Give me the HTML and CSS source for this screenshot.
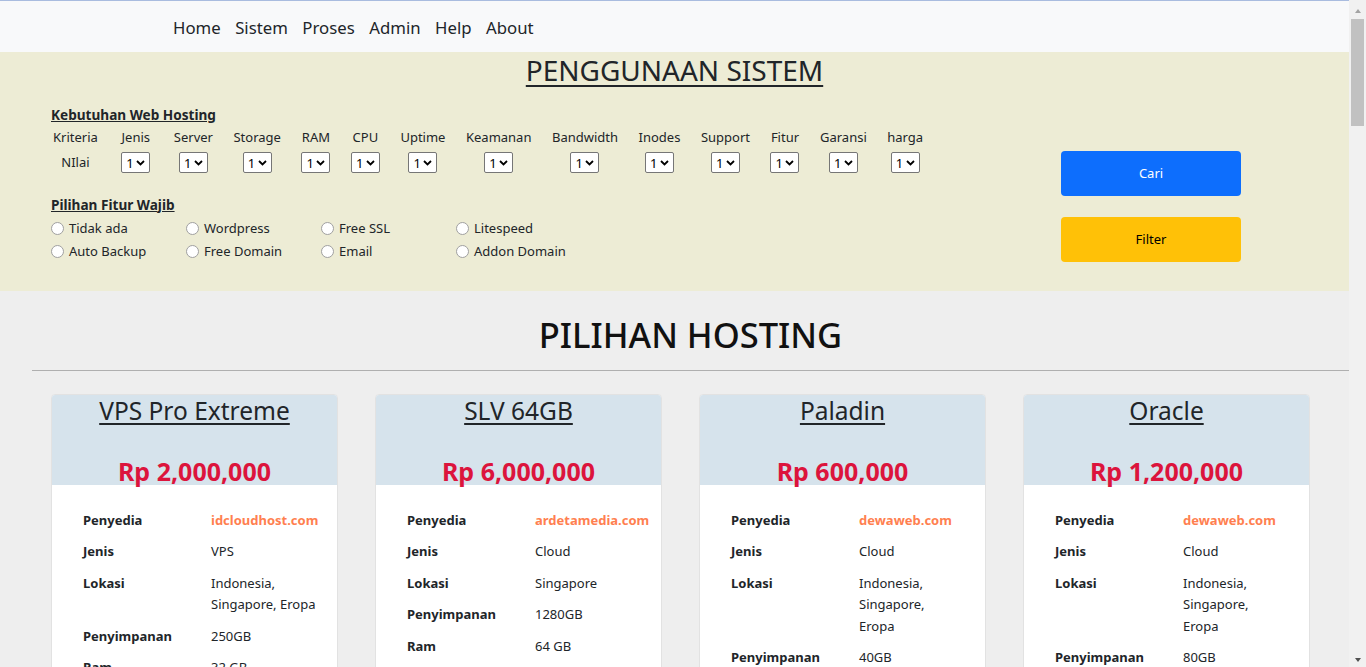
FILE: index.html
```html
<!DOCTYPE html>
<html lang="id">
<head>
<meta charset="utf-8">
<title>Penggunaan Sistem</title>
<link rel="stylesheet" href="styles.css">
</head>
<body>
<nav class="navbar">
  <ul class="nav-links">
    <li><a href="#">Home</a></li>
    <li><a href="#">Sistem</a></li>
    <li><a href="#">Proses</a></li>
    <li><a href="#">Admin</a></li>
    <li><a href="#">Help</a></li>
    <li><a href="#">About</a></li>
  </ul>
</nav>

<section class="usage">
  <h3 class="usage-title">PENGGUNAAN SISTEM</h3>
  <div class="usage-grid">
    <form class="usage-form">
      <h6 class="form-heading">Kebutuhan Web Hosting</h6>
      <table class="criteria">
        <tr>
          <th>Kriteria</th><th>Jenis</th><th>Server</th><th>Storage</th><th>RAM</th><th>CPU</th><th>Uptime</th><th>Keamanan</th><th>Bandwidth</th><th>Inodes</th><th>Support</th><th>Fitur</th><th>Garansi</th><th>harga</th>
        </tr>
        <tr>
          <td>NIlai</td>
          <td><select><option>1</option><option>2</option><option>3</option></select></td>
          <td><select><option>1</option><option>2</option><option>3</option></select></td>
          <td><select><option>1</option><option>2</option><option>3</option></select></td>
          <td><select><option>1</option><option>2</option><option>3</option></select></td>
          <td><select><option>1</option><option>2</option><option>3</option></select></td>
          <td><select><option>1</option><option>2</option><option>3</option></select></td>
          <td><select><option>1</option><option>2</option><option>3</option></select></td>
          <td><select><option>1</option><option>2</option><option>3</option></select></td>
          <td><select><option>1</option><option>2</option><option>3</option></select></td>
          <td><select><option>1</option><option>2</option><option>3</option></select></td>
          <td><select><option>1</option><option>2</option><option>3</option></select></td>
          <td><select><option>1</option><option>2</option><option>3</option></select></td>
          <td><select><option>1</option><option>2</option><option>3</option></select></td>
        </tr>
      </table>
      <h6 class="form-heading features-heading">Pilihan Fitur Wajib</h6>
      <div class="features">
        <label class="feature"><input type="radio" name="f1">Tidak ada</label>
        <label class="feature"><input type="radio" name="f2">Wordpress</label>
        <label class="feature"><input type="radio" name="f3">Free SSL</label>
        <label class="feature"><input type="radio" name="f4">Litespeed</label>
        <label class="feature"><input type="radio" name="f5">Auto Backup</label>
        <label class="feature"><input type="radio" name="f6">Free Domain</label>
        <label class="feature"><input type="radio" name="f7">Email</label>
        <label class="feature"><input type="radio" name="f8">Addon Domain</label>
      </div>
    </form>
    <div class="usage-actions">
      <button class="btn btn-blue" type="button">Cari</button>
      <button class="btn btn-yellow" type="button">Filter</button>
    </div>
  </div>
</section>

<section class="hosting">
  <h1 class="hosting-title">PILIHAN HOSTING</h1>
  <hr class="divider">
  <div class="cards">
    <article class="card">
      <header class="card-head">
        <h4 class="card-title">VPS Pro Extreme</h4>
        <div class="card-price">Rp 2,000,000</div>
      </header>
      <div class="card-body">
        <table class="spec">
          <tr><th>Penyedia</th><td><a class="provider" href="#">idcloudhost.com</a></td></tr>
          <tr><th>Jenis</th><td>VPS</td></tr>
          <tr><th>Lokasi</th><td>Indonesia, Singapore, Eropa</td></tr>
          <tr><th>Penyimpanan</th><td>250GB</td></tr>
          <tr><th>Ram</th><td>32 GB</td></tr>
          <tr><th>CPU</th><td>8 Core</td></tr>
          <tr><th>Uptime</th><td>99.9%</td></tr>
          <tr><th>Bandwidth</th><td>Unlimited</td></tr>
        </table>
      </div>
    </article>
    <article class="card">
      <header class="card-head">
        <h4 class="card-title">SLV 64GB</h4>
        <div class="card-price">Rp 6,000,000</div>
      </header>
      <div class="card-body">
        <table class="spec">
          <tr><th>Penyedia</th><td><a class="provider" href="#">ardetamedia.com</a></td></tr>
          <tr><th>Jenis</th><td>Cloud</td></tr>
          <tr><th>Lokasi</th><td>Singapore</td></tr>
          <tr><th>Penyimpanan</th><td>1280GB</td></tr>
          <tr><th>Ram</th><td>64 GB</td></tr>
          <tr><th>CPU</th><td>16 Core</td></tr>
          <tr><th>Uptime</th><td>99.9%</td></tr>
          <tr><th>Bandwidth</th><td>Unlimited</td></tr>
        </table>
      </div>
    </article>
    <article class="card">
      <header class="card-head">
        <h4 class="card-title">Paladin</h4>
        <div class="card-price">Rp 600,000</div>
      </header>
      <div class="card-body">
        <table class="spec">
          <tr><th>Penyedia</th><td><a class="provider" href="#">dewaweb.com</a></td></tr>
          <tr><th>Jenis</th><td>Cloud</td></tr>
          <tr><th>Lokasi</th><td>Indonesia, Singapore, Eropa</td></tr>
          <tr><th>Penyimpanan</th><td>40GB</td></tr>
          <tr><th>Ram</th><td>4 GB</td></tr>
          <tr><th>CPU</th><td>2 Core</td></tr>
          <tr><th>Uptime</th><td>99.9%</td></tr>
        </table>
      </div>
    </article>
    <article class="card">
      <header class="card-head">
        <h4 class="card-title">Oracle</h4>
        <div class="card-price">Rp 1,200,000</div>
      </header>
      <div class="card-body">
        <table class="spec">
          <tr><th>Penyedia</th><td><a class="provider" href="#">dewaweb.com</a></td></tr>
          <tr><th>Jenis</th><td>Cloud</td></tr>
          <tr><th>Lokasi</th><td>Indonesia, Singapore, Eropa</td></tr>
          <tr><th>Penyimpanan</th><td>80GB</td></tr>
          <tr><th>Ram</th><td>8 GB</td></tr>
          <tr><th>CPU</th><td>4 Core</td></tr>
          <tr><th>Uptime</th><td>99.9%</td></tr>
        </table>
      </div>
    </article>
  </div>
</section>

<div class="scrollbar" aria-hidden="true">
  <span class="sb-up"></span>
  <span class="sb-thumb"></span>
  <span class="sb-down"></span>
</div>
</body>
</html>
```

FILE: styles.css
```css
* { box-sizing: border-box; }

html, body { margin: 0; padding: 0; }

html { background: #eeeeee; }

body {
  margin-right: 17px;
  font-family: "Noto Sans", "Open Sans", sans-serif;
  font-size: 13px;
  line-height: 21px;
  color: #212529;
  background: #eeeeee;
}

/* ---------- navbar ---------- */
.navbar {
  height: 52px;
  background: #f8f9fa;
  border-top: 1px solid #a9bcdf;
  display: flex;
  align-items: center;
  padding: 3px 0 0 173px;
}
.nav-links {
  list-style: none;
  margin: 0;
  padding: 0;
  display: flex;
  gap: 14.5px;
}
.nav-links a {
  color: #212529;
  text-decoration: none;
  font-size: 16.75px;
  line-height: 24px;
}

/* ---------- usage panel ---------- */
.usage {
  background: #edecd5;
  padding: 0 0 28.5px;
}
.usage-title {
  margin: 0;
  text-align: center;
  font-size: 28px;
  line-height: 36px;
  font-weight: 400;
  text-decoration: underline;
  text-decoration-thickness: 2px;
  text-underline-offset: 4px;
}
.usage-grid {
  display: grid;
  grid-template-columns: 1010px 180px;
  padding-left: 51px;
  margin-top: 16px;
}
.form-heading {
  margin: 0;
  font-size: 13.6px;
  line-height: 21px;
  font-weight: 700;
  text-decoration: underline;
}
.criteria {
  border-collapse: collapse;
  margin: 2px 0 0 2px;
}
.criteria th,
.criteria td {
  padding: 0 20.5px 0 0;
  text-align: center;
  font-weight: 400;
  white-space: nowrap;
}
.criteria th:nth-child(-n+2),
.criteria td:nth-child(-n+2) {
  padding-right: 23.5px;
}
.criteria th { padding-bottom: 2px; }
.criteria td { height: 24px; vertical-align: middle; }
.criteria select {
  appearance: none;
  -webkit-appearance: none;
  width: 29px;
  height: 21px;
  margin: 0;
  padding: 0 0 0 4px;
  border: 1px solid #767676;
  border-radius: 2px;
  background: #fff url("data:image/svg+xml,%3Csvg xmlns='http://www.w3.org/2000/svg' width='9' height='6' viewBox='0 0 9 6'%3E%3Cpath d='M1 1l3.5 3.5L8 1' fill='none' stroke='%23000' stroke-width='1.8'/%3E%3C/svg%3E") no-repeat right 4px center;
  font-family: "Noto Sans", sans-serif;
  font-size: 13px;
  color: #000;
  vertical-align: middle;
}
.features-heading { margin-top: 19.5px; }
.features {
  display: grid;
  grid-template-columns: repeat(4, 135px);
  margin-top: 2px;
}
.feature {
  display: flex;
  align-items: center;
  line-height: 23px;
  height: 23px;
  white-space: nowrap;
}
.feature input {
  appearance: none;
  -webkit-appearance: none;
  width: 13px;
  height: 13px;
  margin: 0 5px 0 0;
  border: 1px solid #a0a0a0;
  border-radius: 50%;
  background: #fff;
  flex: none;
}
.usage-actions {
  display: flex;
  flex-direction: column;
  gap: 21px;
  padding-top: 47px;
}
.btn {
  width: 180px;
  height: 45px;
  border: none;
  border-radius: 4px;
  font-family: "Noto Sans", sans-serif;
  font-size: 13px;
  cursor: pointer;
  padding: 0 0 2px;
}
.btn-blue { background: #0d6efd; color: #fff; }
.btn-yellow { background: #ffc107; color: #000; }

/* ---------- hosting list ---------- */
.hosting {
  padding: 22px 0 0 32px;
}
.hosting-title {
  margin: 0;
  text-align: center;
  font-size: 34.5px;
  line-height: 43px;
  font-weight: 500;
  color: #111;
}
.divider {
  margin: 13.5px 0 0;
  border: 0;
  border-top: 1px solid #afafaf;
  height: 0;
}
.cards {
  display: flex;
  gap: 37px;
  padding: 23px 0 40px 19px;
  align-items: flex-start;
}
.card {
  width: 287px;
  background: #fff;
  border: 1px solid #e2e2e2;
  border-radius: 4px;
  overflow: hidden;
}
.card-head {
  background: #d6e3ec;
  text-align: center;
  padding-top: 1px;
}
.card-title {
  margin: 0;
  font-size: 24.5px;
  line-height: 30px;
  font-weight: 400;
  text-decoration: underline;
  text-underline-offset: 3px;
}
.card-price {
  margin-top: 32px;
  font-size: 25px;
  line-height: 27px;
  font-weight: 700;
  color: #dc143c;
}
.card-body {
  padding: 20px 31px 12px;
}
.spec {
  width: 100%;
  border-collapse: collapse;
}
.spec th,
.spec td {
  padding: 5px 0;
  line-height: 21.5px;
  text-align: left;
  vertical-align: top;
}
.spec th {
  width: 128px;
  min-width: 128px;
  font-weight: 700;
}
.provider {
  color: #ff7f50;
  font-weight: 700;
  text-decoration: none;
}

/* ---------- window scrollbar ---------- */
.scrollbar {
  position: fixed;
  top: 0;
  right: 0;
  width: 17px;
  height: 100vh;
  background: #f1f1f1;
  display: flex;
  flex-direction: column;
  align-items: center;
}
.sb-up,
.sb-down {
  width: 0;
  height: 0;
  border-left: 3.5px solid transparent;
  border-right: 3.5px solid transparent;
}
.sb-up {
  margin-top: 9px;
  border-bottom: 4px solid #a3a3a3;
}
.sb-thumb {
  margin-top: 6px;
  width: 13px;
  height: 107px;
  background: #c1c1c1;
}
.sb-down {
  margin-top: auto;
  margin-bottom: 5px;
  border-top: 4px solid #505050;
}
```
